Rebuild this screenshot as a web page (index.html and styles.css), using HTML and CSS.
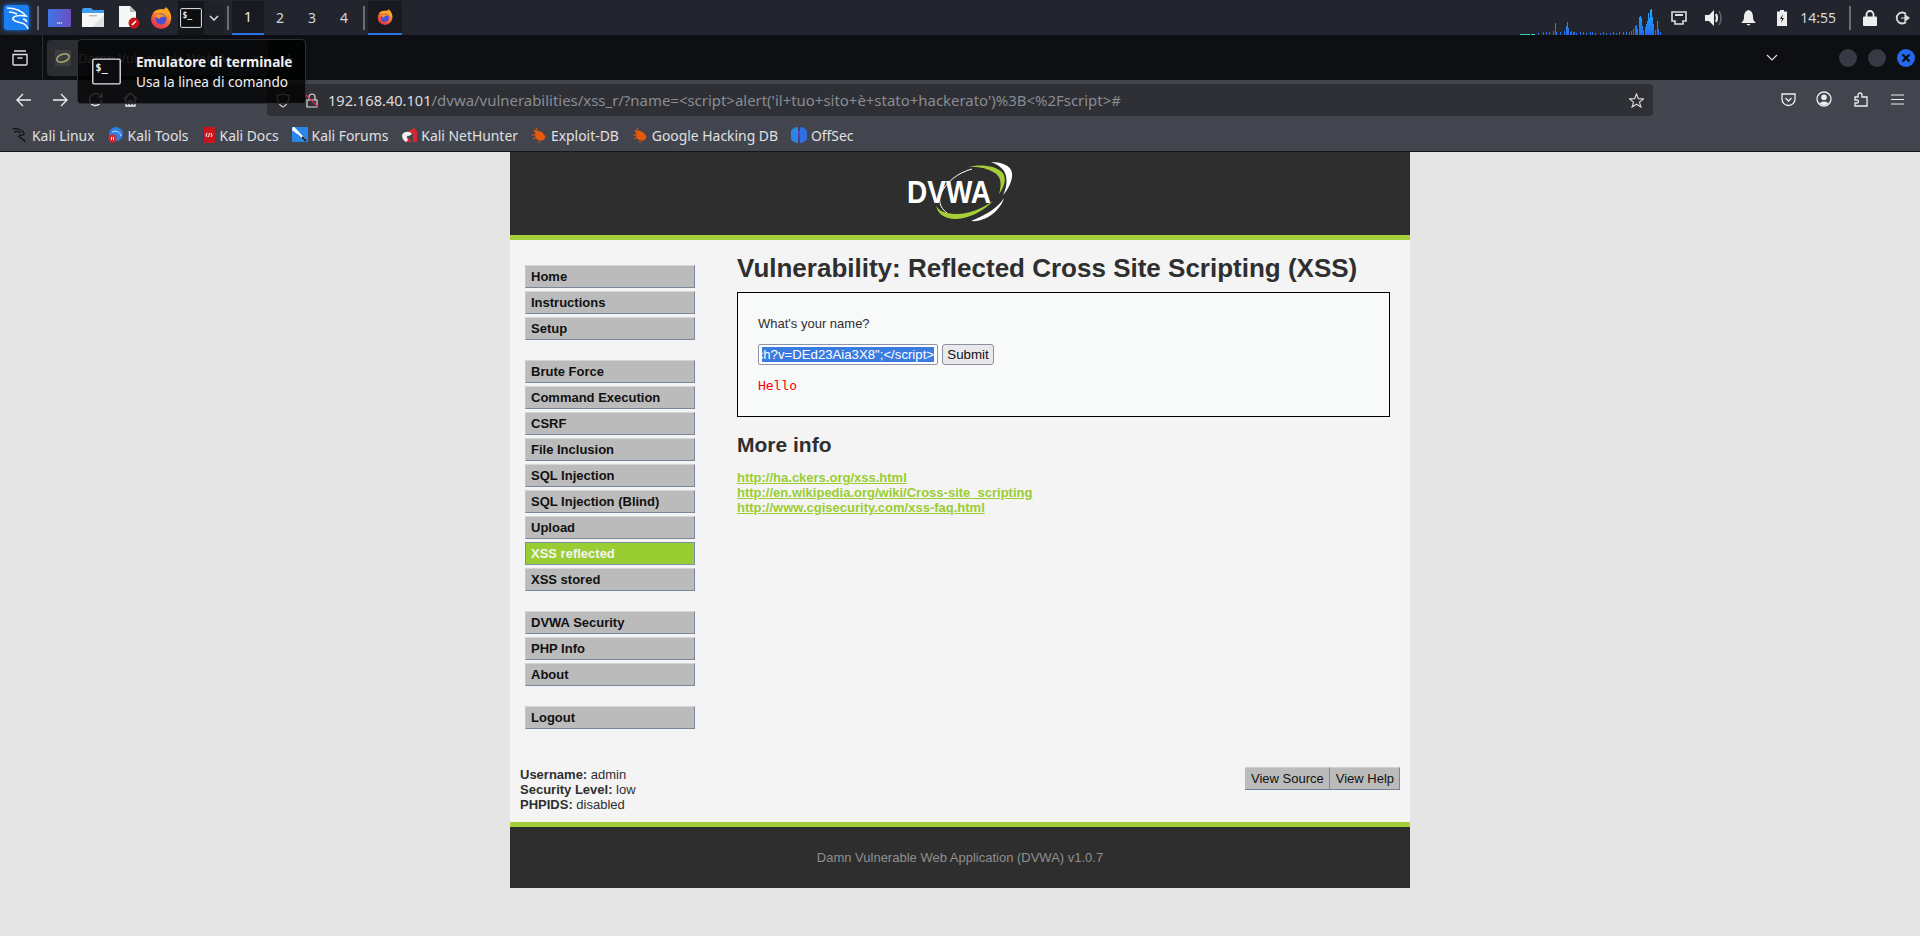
FILE: index.html
```html
<!DOCTYPE html>
<html lang="en">
<head>
    <meta charset="UTF-8">
    <title>Vulnerability: Reflected Cross Site Scripting (XSS)</title>
    <link rel="stylesheet" href="styles.css">
</head>
<body>
    <svg class="defs">
        <defs>
            <linearGradient id="fxRing" x1="0.8" y1="0" x2="0.2" y2="1">
                <stop offset="0" stop-color="#ffb02e"/>
                <stop offset="1" stop-color="#e8234f"/>
            </linearGradient>
            <linearGradient id="netGrad" x1="0" y1="0" x2="0" y2="1">
                <stop offset="0" stop-color="#18b4ff"/>
                <stop offset="1" stop-color="#2468f0"/>
            </linearGradient>
            <linearGradient id="deskGrad" x1="0" y1="0" x2="1" y2="0">
                <stop offset="0" stop-color="#3f74e6"/>
                <stop offset="1" stop-color="#6b4fc2"/>
            </linearGradient>
            <symbol id="firefox" viewBox="0 0 22 22">
                <circle cx="11" cy="12" r="10" fill="url(#fxRing)"/>
                <path d="M3 6 C6 2 9 3 11 3 C13 3 15 2 16 0 C20 4 22 8 21 13 C18 8 12 5 3 6Z" fill="#ffa51f"/>
                <circle cx="11" cy="12" r="5.5" fill="#4a4fd8"/>
                <path d="M5 9 C9 6 14 7 16 10 C13 8.5 10 10 9 12 C8 11 6 10 5 9Z" fill="#ff9a1f"/>
            </symbol>
            <symbol id="bug" viewBox="0 0 16 16">
                <path d="M3 3 L7 5 C10 4 13 7 14 10 C14 12 11 14 9 13 C6 13 4 10 5 7Z M1 8 L5 8 M2 12 L6 10 M8 14 L8 16 M5 1 L7 5" fill="#e8590c" stroke="#e8590c"/>
            </symbol>
            <symbol id="term" viewBox="0 0 22 20">
                <rect x=".6" y=".6" width="20.8" height="18.8" rx="1" fill="#0c0d10" stroke="#e8e8e8" stroke-width="1"/>
                <text x="2.5" y="9.5" class="term-text">$_</text>
            </symbol>
        </defs>
    </svg>

    <div class="panel">
        <div class="panel-left">
            <div class="kali-btn">
                <svg width="25" height="25" viewBox="0 0 25 25"><path d="M3 3 C9 3 17 5 22 11 C16 10 11 10 9 13 C8 16 14 17 18 18 C21 19 23 21 24 24 M5 7 C8 7 11 8 13 9 M19 14 C21 14 22 15 23 17" fill="none" stroke="#fff" stroke-width="1.5"/></svg>
            </div>
            <span class="panel-sep sep-a"></span>
            <svg class="launcher l-desk" width="23" height="18" viewBox="0 0 23 18"><rect width="23" height="18" rx="1" fill="url(#deskGrad)"/><path d="M9 14 H14" stroke="#ddd" stroke-dasharray="1.3 .6" stroke-width="1.4"/></svg>
            <svg class="launcher l-folder" width="22" height="19" viewBox="0 0 22 19"><path d="M0 2 Q0 0 2 0 H9 L11 2 H22 V19 H0Z" fill="#3d9df0"/><path d="M0 5 H22 V19 H0Z" fill="#f6f6f6"/><path d="M22 7 V19 H10Z" fill="#e2e2e2"/><rect x="7" y="7" width="8" height="1.4" fill="#bbb"/></svg>
            <svg class="launcher l-file" width="22" height="23" viewBox="0 0 22 23"><path d="M1 0 H12 L18 6 V21 H1Z" fill="#f6f6f6"/><path d="M12 0 L18 6 H12Z" fill="#bbb"/><circle cx="16" cy="17" r="5.5" fill="#c6161c"/><path d="M14 19 L18 15" stroke="#fff" stroke-width="1.6"/></svg>
            <svg class="launcher l-fox" width="22" height="22"><use href="#firefox"/></svg>
            <div class="term-launcher"><svg width="22" height="20"><use href="#term"/></svg></div>
            <div class="chev-box"><svg width="10" height="6" viewBox="0 0 10 6"><path d="M1 1 L5 5 L9 1" fill="none" stroke="#ddd" stroke-width="1.5"/></svg></div>
            <span class="panel-sep"></span>
            <div class="ws ws-on">1</div>
            <div class="ws">2</div>
            <div class="ws">3</div>
            <div class="ws">4</div>
            <span class="panel-sep"></span>
            <div class="task"><svg width="16" height="16"><use href="#firefox"/></svg></div>
        </div>
        <div class="panel-right">
            <svg class="net" width="142" height="34" viewBox="0 0 142 34" shape-rendering="crispEdges">
                <path d="M0 33 H10 M11 33 H15" stroke="#2bd6b0" stroke-width="1" fill="none"/>
                <path d="M18 34V32M23 34V31M26 34V31M29 34V31M33 34V30M36 34V31M40 34V31M44 34V30M47 34V32M50 34V31M53 34V31M56 34V32M60 34V31M63 34V31M66 34V32M70 34V31M72 34V31M75 34V32M80 34V32M83 34V31M86 34V32M90 34V32M93 34V31M96 34V32M99 34V31M103 34V31M106 34V31M109 34V31M111 34V30M113 34V28M115 34V31M35 34V22M47 34V21M46 34V25M48 34V27M51 34V30M54 34V31M115 34V25M116 34V24M117 34V28M119 34V16M120 34V15M121 34V17M122 34V25M123 34V29M125 34V26M126 34V23M127 34V20M128 34V12M129 34V17M130 34V9M131 34V8M132 34V16M133 34V23M135 34V29M137 34V20M138 34V28M140 34V31" stroke="url(#netGrad)" stroke-width="1" fill="none"/>
            </svg>
            <svg class="tray t-net" width="16" height="14" viewBox="0 0 16 14"><path d="M1 1 H15 V10 H12 V13 H4 V10 H1Z" fill="none" stroke="#ddd" stroke-width="1.6"/><path d="M4 3 H12 V5 H4Z" fill="#ddd"/></svg>
            <svg class="tray t-vol" width="18" height="16" viewBox="0 0 18 16"><path d="M0 5 H4 L9 0 V16 L4 11 H0Z" fill="#eee"/><path d="M11 4 Q13 8 11 12" fill="none" stroke="#eee" stroke-width="2"/><path d="M14 1 Q18 8 14 15" fill="none" stroke="#666" stroke-width="1.5"/></svg>
            <svg class="tray t-bell" width="15" height="16" viewBox="0 0 15 16"><path d="M7.5 0 C4 1 3 4 3 7 C3 10 2 11 0 13 H15 C13 11 12 10 12 7 C12 4 11 1 7.5 0Z M5.5 14 H9.5 Q7.5 17 5.5 14Z" fill="#eee"/></svg>
            <svg class="tray t-batt" width="10" height="16" viewBox="0 0 10 16"><path d="M3 0 H7 V1.5 H10 V16 H0 V1.5 H3Z" fill="#eee"/><path d="M6 4 L3 9 H5 L4 13 L7 8 H5Z" fill="#22252d"/></svg>
            <span class="clock">14:55</span>
            <span class="panel-sep sep-c"></span>
            <svg class="tray t-lock" width="14" height="16" viewBox="0 0 14 16"><path d="M3.5 7 V4.5 A3.5 3.5 0 0 1 10.5 4.5 V7" fill="none" stroke="#eee" stroke-width="1.8"/><rect y="6.5" width="14" height="9.5" rx="1" fill="#eee"/></svg>
            <svg class="tray t-out" width="15" height="14" viewBox="0 0 15 14"><path d="M11 3 A5.5 5.5 0 1 0 11 11" fill="none" stroke="#ddd" stroke-width="1.8"/><path d="M6 7 H12 M10 4 L14 7 L10 10Z" fill="#ddd" stroke="#ddd" stroke-width="1.2"/></svg>
        </div>
    </div>

    <div class="tabbar">
        <svg class="tabs-icon" width="16" height="16" viewBox="0 0 16 16"><path d="M2 1 H14 M1 4.5 H15 V14 Q15 15 14 15 H2 Q1 15 1 14Z M5.5 8 H10.5" fill="none" stroke="#ddd" stroke-width="1.4"/></svg>
        <span class="tab-sep"></span>
        <div class="tab">
            <svg width="16" height="16" viewBox="0 0 16 16"><rect width="16" height="16" fill="#3b3d40"/><ellipse cx="8" cy="8" rx="6.5" ry="3.8" transform="rotate(-20 8 8)" fill="none" stroke="#a3ae6a" stroke-width="1.5"/></svg>
            <span class="tab-title">Damn Vulnerable Web A</span>
            <span class="tab-x">×</span>
        </div>
        <span class="tab-plus">+</span>
        <div class="win-btns">
            <svg class="tabs-list" width="12" height="7" viewBox="0 0 12 7"><path d="M1 1 L6 6 L11 1" fill="none" stroke="#ddd" stroke-width="1.2"/></svg>
            <span class="win-dot"></span>
            <span class="win-dot"></span>
            <span class="win-dot win-close">
                <svg width="10" height="10" viewBox="0 0 10 10"><path d="M1.5 1.5 L8.5 8.5 M8.5 1.5 L1.5 8.5" stroke="#0c0d10" stroke-width="2.4"/></svg>
            </span>
        </div>
    </div>

    <div class="navbar">
        <svg class="nav-ic back" width="16" height="14" viewBox="0 0 16 14"><path d="M15 7 H1.5 M7 1 L1 7 L7 13" fill="none" stroke="#eee" stroke-width="1.4"/></svg>
        <svg class="nav-ic fwd" width="16" height="14" viewBox="0 0 16 14"><path d="M1 7 H14.5 M9 1 L15 7 L9 13" fill="none" stroke="#eee" stroke-width="1.4"/></svg>
        <svg class="nav-ic reload" width="15" height="15" viewBox="0 0 15 15"><path d="M13.5 7.5 A6 6 0 1 1 11.5 3 L14 5 M14 1 V5 H10" fill="none" stroke="#eee" stroke-width="1.3"/></svg>
        <svg class="nav-ic home" width="15" height="15" viewBox="0 0 15 15"><path d="M1 7 L7.5 1 L14 7 M3 6 V14 H12 V6 M6 14 V9 H9 V14" fill="none" stroke="#eee" stroke-width="1.3"/></svg>
        <div class="urlbar">
            <svg class="shield" width="14" height="15" viewBox="0 0 14 15"><path d="M7 1 L13 2.5 C13 9 11 12 7 14 C3 12 1 9 1 2.5Z" fill="none" stroke="#c8c8c8" stroke-width="1.2"/></svg>
            <svg class="padlock" width="14" height="15" viewBox="0 0 14 15"><path d="M4 7 V4 A3 3 0 0 1 10 4 V7 M2 7 H12 V14 H2Z" fill="none" stroke="#ddd" stroke-width="1.2"/><path d="M0 1 L13 14" stroke="#e22850" stroke-width="1.2"/></svg>
            <span class="url"><span class="url-host">192.168.40.101</span>/dvwa/vulnerabilities/xss_r/?name=&lt;script&gt;alert('il+tuo+sito+è+stato+hackerato')%3B&lt;%2Fscript&gt;#</span>
            <svg class="star" width="15" height="15" viewBox="0 0 16 16"><path d="M8 1 L10 6 L15.5 6.3 L11.2 9.7 L12.7 15 L8 12 L3.3 15 L4.8 9.7 L.5 6.3 L6 6Z" fill="none" stroke="#ddd" stroke-width="1.2"/></svg>
        </div>
        <svg class="nav-ic pocket" width="15" height="14" viewBox="0 0 15 14"><path d="M1 1 H14 V6 A6.5 6.5 0 0 1 1 6Z M4.5 5 L7.5 8 L10.5 5" fill="none" stroke="#eee" stroke-width="1.3"/></svg>
        <svg class="nav-ic account" width="16" height="16" viewBox="0 0 16 16"><circle cx="8" cy="8" r="7" fill="none" stroke="#eee" stroke-width="1.3"/><circle cx="8" cy="6.3" r="2.8" fill="#eee"/><path d="M3 12.5 Q8 8.5 13 12.5 Q8 16 3 12.5Z" fill="#eee"/></svg>
        <svg class="nav-ic ext" width="14" height="15" viewBox="0 0 14 15"><path d="M1 5 H4 V3 A2 2 0 0 1 8 3 V5 H13 V14 H1 V11 H3 A1.5 1.5 0 0 0 3 8 H1Z" fill="none" stroke="#eee" stroke-width="1.3"/></svg>
        <svg class="nav-ic burger" width="13" height="11" viewBox="0 0 13 11"><path d="M0 1 H13 M0 5.5 H13 M0 10 H13" stroke="#eee" stroke-width="1.2"/></svg>
    </div>

    <div class="bookmarks">
        <span class="bm"><svg width="16" height="16" viewBox="0 0 16 16"><path d="M1 2 C5 1 11 3 12 6 C13 9 8 8 7 9 C6 11 12 11 13 15 M2 5 C5 4 8 5 9 6" fill="none" stroke="#111" stroke-width="1.3"/></svg>Kali Linux</span>
        <span class="bm"><svg width="16" height="16" viewBox="0 0 16 16"><circle cx="8" cy="7" r="7" fill="#2f7fe0"/><path d="M4 5 C8 3 12 5 13 9" fill="none" stroke="#cfe6ff"/><circle cx="4.5" cy="11.5" r="4" fill="#d8262c"/><path d="M3.5 10 V13 M5.5 10 V13" stroke="#fff"/></svg>Kali Tools</span>
        <span class="bm"><svg width="14" height="16" viewBox="0 0 14 16"><rect width="13" height="16" fill="#c8161c"/><rect width="2" height="16" fill="#3c3f66"/><path d="M5 6 L4 8 L5 10 M9 6 L10 8 L9 10 M6.5 10 L7.5 6" fill="none" stroke="#fff"/></svg>Kali Docs</span>
        <span class="bm"><svg width="16" height="16" viewBox="0 0 16 16"><rect width="16" height="15" fill="#2a86e8"/><path d="M1 0 L13 13 M0 2 L7 7" stroke="#fff" stroke-width="2"/><path d="M10 10 L14 14" stroke="#222" stroke-width="2"/></svg>Kali Forums</span>
        <span class="bm"><svg width="16" height="16" viewBox="0 0 16 16"><path d="M1 8 L13 1 L16 4 V15 H12 V6 L6 9 L11 15 H5Z" fill="#d8262c"/><path d="M1 8 C3 4 9 4 11 7 L8 9 C6 8 5 10 7 13 L5 15 C2 13 1 11 1 8Z" fill="#f4f4f4"/></svg>Kali NetHunter</span>
        <span class="bm"><svg width="16" height="16"><use href="#bug"/></svg>Exploit-DB</span>
        <span class="bm"><svg width="16" height="16"><use href="#bug"/></svg>Google Hacking DB</span>
        <span class="bm"><svg width="16" height="16" viewBox="0 0 16 16"><path d="M7 0 A8 8 0 0 0 7 16Z" fill="#2a86e8"/><path d="M9 0 A8 8 0 0 1 9 16Z" fill="#2f6fe0"/><path d="M7 4 H9 L8 16Z" fill="#6a3fd0"/></svg>OffSec</span>
    </div>

    <div class="tooltip">
        <svg class="tooltip-icon" width="29" height="27"><use href="#term"/></svg>
        <div class="tooltip-text">
            <div class="tooltip-title">Emulatore di terminale</div>
            <div>Usa la linea di comando</div>
        </div>
    </div>

    <div class="page">
        <div class="container">
            <div class="header">
                <svg class="logo" width="106" height="60" viewBox="0 0 106 60">
                    <path d="M65 7 C50 11 40 20 34 31 C31 38 33 46 40 51" fill="none" stroke="#fff" stroke-width="1"/>
                    <path d="M60 5 C72 2 88 3 95 10 C100 16 98 24 92 32 C95 22 94 15 88 11 C80 6 70 4 60 5Z" fill="#a6ce39"/>
                    <path d="M84 0 C96 0 104 4 105 11 C106 18 101 28 96 33 C100 25 101 16 97 9 C94 5 90 2 84 0Z" fill="#fff"/>
                    <path d="M29 44 C31 52 38 57 48 57 C60 57 76 50 86 39 C76 46 62 52 50 52 C40 52 33 50 29 44Z" fill="#a6ce39"/>
                    <path d="M64 59 C72 60 82 56 89 49 C93 45 96 40 97 36 C92 44 82 52 64 59Z" fill="#fff"/>
                    <text x="0" y="41" class="logo-text" textLength="84" lengthAdjust="spacingAndGlyphs">DVWA</text>
                </svg>
            </div>
            <div class="main">
                <div class="columns">
                    <div class="sidebar">
                        <div class="menu-group">
                            <a class="menu-item">Home</a>
                            <a class="menu-item">Instructions</a>
                            <a class="menu-item">Setup</a>
                        </div>
                        <div class="menu-group">
                            <a class="menu-item">Brute Force</a>
                            <a class="menu-item">Command Execution</a>
                            <a class="menu-item">CSRF</a>
                            <a class="menu-item">File Inclusion</a>
                            <a class="menu-item">SQL Injection</a>
                            <a class="menu-item">SQL Injection (Blind)</a>
                            <a class="menu-item">Upload</a>
                            <a class="menu-item selected">XSS reflected</a>
                            <a class="menu-item">XSS stored</a>
                        </div>
                        <div class="menu-group">
                            <a class="menu-item">DVWA Security</a>
                            <a class="menu-item">PHP Info</a>
                            <a class="menu-item">About</a>
                        </div>
                        <div class="menu-group">
                            <a class="menu-item">Logout</a>
                        </div>
                    </div>
                    <div class="body-col">
                        <h1>Vulnerability: Reflected Cross Site Scripting (XSS)</h1>
                        <div class="vulnerable-code">
                            <p class="ask">What's your name?</p>
                            <div class="form-row">
                                <div class="name-input"><div class="name-clip"><span class="name-sel">ch?v=DEd23Aia3X8";&lt;/script&gt;</span></div></div>
                                <button class="submit">Submit</button>
                            </div>
                            <pre class="hello">Hello</pre>
                        </div>
                        <h2>More info</h2>
                        <ul class="links">
                            <li><a>http://ha.ckers.org/xss.html</a></li>
                            <li><a>http://en.wikipedia.org/wiki/Cross-site_scripting</a></li>
                            <li><a>http://www.cgisecurity.com/xss-faq.html</a></li>
                        </ul>
                    </div>
                </div>
                <div class="status-row">
                    <div class="status">
                        <div><b>Username:</b> admin</div>
                        <div><b>Security Level:</b> low</div>
                        <div><b>PHPIDS:</b> disabled</div>
                    </div>
                    <div class="view-btns">
                        <span class="view-btn">View Source</span>
                        <span class="view-btn">View Help</span>
                    </div>
                </div>
            </div>
            <div class="footer">Damn Vulnerable Web Application (DVWA) v1.0.7</div>
        </div>
    </div>
</body>
</html>
```

FILE: styles.css
```css
* {
    box-sizing: border-box;
}
html, body {
    margin: 0;
    height: 100%;
    overflow: hidden;
}
body {
    display: flex;
    flex-direction: column;
    font-family: "Noto Sans", sans-serif;
    position: relative;
    background: #e5e5e5;
}
.defs {
    width: 0;
    height: 0;
    position: absolute;
}
.term-text {
    font-family: "DejaVu Sans Mono", monospace;
    font-size: 8px;
    font-weight: bold;
    fill: #eee;
}

/* desktop panel */
.panel {
    height: 35px;
    background: #22252d;
    display: flex;
    justify-content: space-between;
    flex: none;
}
.panel-left, .panel-right {
    display: flex;
    align-items: center;
}
.panel-right {
    padding-right: 10px;
}
.kali-btn {
    width: 25px;
    height: 25px;
    margin-left: 4px;
    background: #1a7ff0;
    border-radius: 3px;
    box-shadow: 0 0 5px #1a6fe0;
}
.panel-sep {
    width: 2px;
    height: 24px;
    background: #6b6e75;
    margin: 0 3px;
}
.sep-a {
    margin: 0 9px 0 8px;
}
.sep-c {
    margin: 0 12px 0 13px;
}
.launcher {
    flex: none;
}
.l-desk {
    margin-right: 11px;
}
.l-folder {
    margin-right: 14px;
}
.l-file {
    margin-right: 10px;
}
.l-fox {
    margin-right: 6px;
}
.term-launcher {
    width: 26px;
    height: 34px;
    background: #14161b;
    display: flex;
    align-items: center;
    justify-content: center;
}
.chev-box {
    width: 20px;
    height: 34px;
    background: #1e2128;
    display: flex;
    align-items: center;
    justify-content: center;
}
.ws {
    width: 32px;
    height: 34px;
    color: #d6d8dc;
    font-size: 14px;
    display: flex;
    align-items: center;
    justify-content: center;
}
.ws-on {
    background: #181a20;
    border-bottom: 2px solid #2a75e6;
    color: #eee;
}
.task {
    width: 34px;
    height: 34px;
    background: #181a20;
    border-bottom: 2px solid #2a75e6;
    display: flex;
    align-items: center;
    justify-content: center;
}
.t-net {
    margin-left: 9px;
}
.t-vol {
    margin-left: 18px;
}
.t-bell {
    margin-left: 18px;
}
.t-batt {
    margin-left: 21px;
}
.t-out {
    margin-left: 18px;
}
.clock {
    color: #d6d8dc;
    font-size: 14px;
    margin-left: 13px;
}

/* tab strip */
.tabbar {
    height: 45px;
    background: #0e0f13;
    display: flex;
    align-items: center;
    flex: none;
}
.tabs-icon {
    margin-left: 12px;
}
.tab-sep {
    width: 1px;
    height: 45px;
    background: #2c2e34;
    margin-left: 14px;
}
.tab {
    width: 221px;
    height: 36px;
    margin-left: 4px;
    background: #2b2d33;
    border-radius: 4px;
    display: flex;
    align-items: center;
    padding: 0 8px;
    gap: 7px;
    color: #9a9a9e;
    font-size: 13px;
}
.tab-title {
    flex: 1;
    white-space: nowrap;
    overflow: hidden;
}
.tab-x {
    font-size: 15px;
}
.tab-plus {
    color: #9a9a9e;
    font-size: 18px;
    margin-left: 16px;
}
.win-btns {
    margin-left: auto;
    display: flex;
    align-items: center;
    margin-right: 5px;
    gap: 11px;
}
.tabs-list {
    margin-right: 50px;
}
.win-dot {
    width: 18px;
    height: 18px;
    border-radius: 50%;
    background: #363a45;
    display: flex;
    align-items: center;
    justify-content: center;
}
.win-close {
    background: #2468f0;
}

/* firefox toolbar */
.navbar {
    height: 37px;
    background: #42454e;
    display: flex;
    align-items: flex-end;
    flex: none;
}
.nav-ic {
    margin-bottom: 10px;
    flex: none;
}
.back {
    margin-left: 16px;
}
.fwd {
    margin-left: 20px;
}
.reload {
    margin-left: 20px;
}
.home {
    margin-left: 20px;
}
.urlbar {
    width: 1386px;
    height: 32px;
    margin-left: 129px;
    margin-bottom: 1px;
    background: #2e3036;
    border-radius: 4px;
    display: flex;
    align-items: center;
    padding: 0 9px;
}
.padlock {
    margin-left: 15px;
}
.url {
    margin-left: 9px;
    color: #8a8c92;
    font-size: 14.95px;
    white-space: nowrap;
    flex: 1;
}
.url-host {
    color: #dcdcde;
    font-size: 14.6px;
}
.pocket {
    margin-left: 128px;
}
.account {
    margin-left: 20px;
}
.ext {
    margin-left: 22px;
}
.burger {
    margin-left: 23px;
    margin-bottom: 12px;
}

/* bookmarks toolbar */
.bookmarks {
    height: 35px;
    background: #42454e;
    border-bottom: 1px solid #16171a;
    display: flex;
    align-items: center;
    padding: 2px 0 0 12px;
    gap: 13px;
    flex: none;
}
.bm {
    display: flex;
    align-items: center;
    gap: 4px;
    color: #e0e0e2;
    font-size: 13.9px;
    white-space: nowrap;
}

.tooltip {
    position: absolute;
    left: 77px;
    top: 39px;
    width: 229px;
    height: 65px;
    background: rgba(0, 0, 0, 0.8);
    border: 1px solid #2e3036;
    border-radius: 4px;
    display: flex;
    align-items: center;
    padding-left: 14px;
    color: #f0f0f0;
    font-size: 13.6px;
    line-height: 20px;
}
.tooltip-icon {
    margin-right: 15px;
}
.tooltip-title {
    font-weight: bold;
}

/* dvwa page */
.page {
    flex: 1;
    background: #e5e5e5;
    font-family: "Liberation Sans", Arial, sans-serif;
    font-size: 13px;
    color: #2f2f2f;
}
.container {
    width: 900px;
    margin: 0 auto;
}
.header {
    height: 88px;
    background: #2e2e2e;
    border-bottom: 5px solid #a6ce39;
    display: flex;
    justify-content: center;
    padding-top: 10px;
}
.logo-text {
    font-family: "Liberation Sans", sans-serif;
    font-size: 31px;
    font-weight: bold;
    fill: #fff;
}
.main {
    height: 582px;
    background: #f4f4f4;
    display: flex;
    flex-direction: column;
    justify-content: space-between;
    padding-bottom: 10px;
}
.columns {
    display: flex;
}
.sidebar {
    width: 170px;
    margin: 25px 0 0 15px;
}
.menu-group {
    margin-bottom: 20px;
}
.menu-item {
    display: block;
    height: 23px;
    margin-bottom: 3px;
    background: #bbb;
    border: 1px solid #7a8699;
    border-top-color: #d6d6d6;
    border-left-color: #c8c8c8;
    padding-left: 5px;
    font-weight: bold;
    line-height: 21px;
    color: #111;
}
.menu-item.selected {
    background: #9acd32;
    color: #f4f4f4;
    border-color: #7a90a8;
}
.body-col {
    width: 653px;
    margin-left: 42px;
    padding-top: 13px;
}
h1 {
    margin: 0 0 9px;
    font-size: 26px;
    line-height: 30px;
    font-weight: bold;
    color: #2f2f2f;
}
.vulnerable-code {
    height: 125px;
    background: #f8f9f9;
    border: 1px solid #000;
    padding: 23px 20px 0;
}
.ask {
    margin: 0 0 13px;
    line-height: 15px;
}
.form-row {
    display: flex;
    gap: 4px;
    height: 21px;
}
.name-input {
    width: 180px;
    height: 21px;
    background: #fff;
    border: 1px solid #8f93a8;
    border-radius: 2px;
    padding: 2px 3px;
}
.name-clip {
    overflow: hidden;
    white-space: nowrap;
    line-height: 15px;
    font-size: 13.2px;
    display: flex;
    justify-content: flex-end;
}
.name-sel {
    background: #3a7be0;
    color: #fff;
}
.submit {
    width: 52px;
    height: 21px;
    padding: 0;
    background: #e9e9ed;
    border: 1px solid #8f8f9d;
    border-radius: 3px;
    font-family: "Liberation Sans", Arial, sans-serif;
    font-size: 13.33px;
    color: #111;
}
.hello {
    margin: 13px 0 0;
    color: #f00;
    font-family: "DejaVu Sans Mono", monospace;
    font-size: 13px;
    line-height: 15px;
}
h2 {
    margin: 16px 0 13px;
    font-size: 21px;
    line-height: 24px;
    font-weight: bold;
    color: #2f2f2f;
}
.links {
    margin: 0;
    padding: 0;
    list-style: none;
}
.links li {
    line-height: 15px;
}
.links a {
    color: #9acd32;
    font-weight: bold;
    text-decoration: underline;
}
.status-row {
    display: flex;
    justify-content: space-between;
    padding: 0 10px;
    align-items: flex-start;
}
.status {
    line-height: 15px;
}
.view-btns {
    display: flex;
}
.view-btn {
    height: 23px;
    padding: 0 5px 0 6px;
    background: #bbb;
    border-top: 1px solid #d0d0d0;
    border-right: 1px solid #7a8699;
    border-bottom: 1px solid #6e7f9c;
    line-height: 21px;
    color: #111;
}
.footer {
    height: 66px;
    background: #2e2e2e;
    border-top: 5px solid #a6ce39;
    text-align: center;
    color: #8f8f8f;
    line-height: 61px;
}
```
